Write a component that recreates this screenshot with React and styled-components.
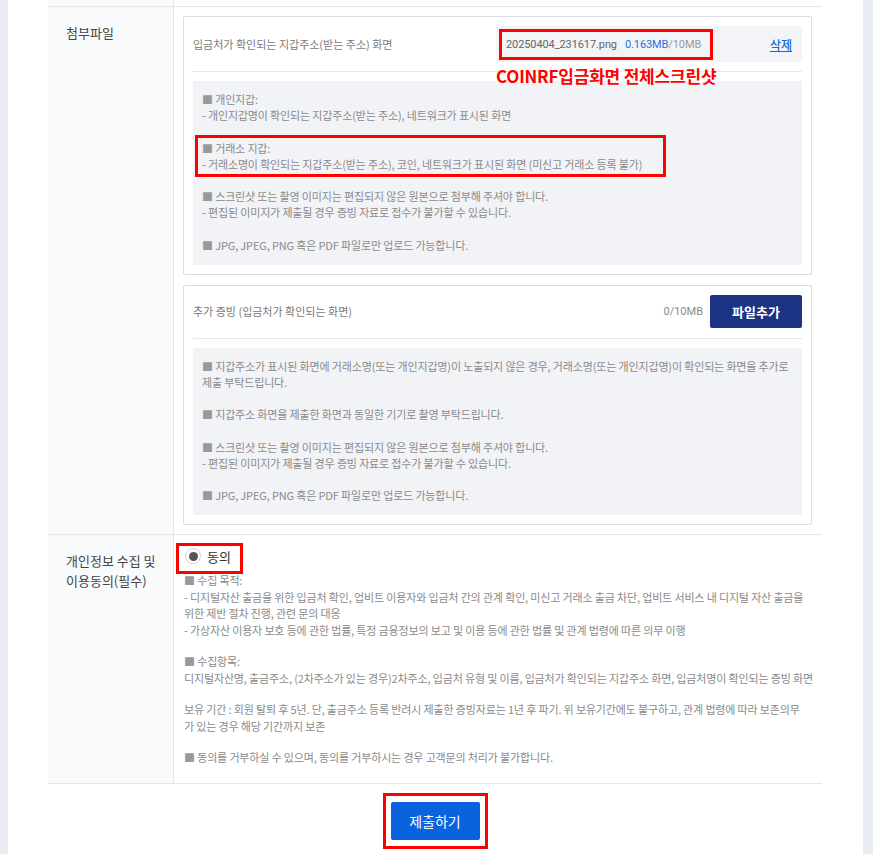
import React from "react";
import styled, { createGlobalStyle } from "styled-components";

const Global = createGlobalStyle`
  html, body { margin: 0; padding: 0; background: #e9ecf1; }
  body { font-family: "Noto Sans CJK KR", "Noto Sans", sans-serif; }
  * { box-sizing: border-box; }
`;

const Panel = styled.div`
  margin-left: 8px;
  width: 855px;
  background: #fff;
  padding: 0 41px 15px 40px;
  min-height: 854px;
`;

const Table = styled.div`
  display: flex;
  flex-direction: column;
`;

const Row = styled.div`
  display: grid;
  grid-template-columns: 126px 1fr;
  border-bottom: 1px solid #e4e6ea;
`;

const Label = styled.div`
  background: #f9fafb;
  border-right: 1px solid #e4e6ea;
  padding: 16px 0 0 18px;
  font-size: 13px;
  line-height: 20px;
  color: #444;
`;

const Cell = styled.div`
  padding: ${(p) => p.$pad || "9px 10px 9px 9px"};
  display: flex;
  flex-direction: column;
  gap: 10px;
  min-width: 0;
`;

const Box = styled.div`
  border: 1px solid #dcdde2;
  border-radius: 2px;
  padding: 9px;
  position: relative;
`;

const BoxHead = styled.div`
  display: flex;
  align-items: center;
  justify-content: space-between;
  padding-bottom: ${(p) => p.$pb || 9}px;
  border-bottom: 1px solid #e6e7eb;
  margin-bottom: 9px;
`;

const BoxTitle = styled.span`
  font-size: 11px;
  color: #7a7a7a;
`;

const FileChip = styled.div`
  width: 306px;
  height: 36px;
  background: #f2f4f8;
  display: flex;
  align-items: center;
  justify-content: space-between;
  padding: 0 10px 0 6px;
  font-size: 11px;
`;

const FileName = styled.span`
  outline: 3px solid #f00;
  padding: 6px 9px 6px 4px;
  color: #666;
  font-family: "Roboto", "Noto Sans CJK KR", sans-serif;
  font-size: 11px;
  letter-spacing: -0.1px;
  white-space: nowrap;
`;

const Size = styled.span`
  color: ${(p) => (p.$blue ? "#1f73e3" : "#9a9a9a")};
  margin-left: ${(p) => (p.$blue ? 8 : 0)}px;
`;

const DeleteLink = styled.a`
  color: #1766d6;
  text-decoration: underline;
  font-size: 12px;
  font-weight: 500;
  cursor: pointer;
`;

const Annotation = styled.span`
  position: absolute;
  left: 312px;
  top: 48px;
  color: #f00;
  font-weight: 700;
  font-size: 17px;
  line-height: 22px;
  letter-spacing: -0.2px;
  font-family: "Noto Sans CJK KR", sans-serif;
  white-space: nowrap;
`;

const HeadRight = styled.div`
  display: flex;
  align-items: center;
  gap: 7px;
`;

const Quota = styled.span`
  font-size: 11px;
  color: #8a8a8a;
  font-family: "Roboto", sans-serif;
`;

const AddButton = styled.button`
  width: 92px;
  height: 33px;
  border: none;
  border-radius: 2px;
  background: #1b3383;
  color: #fff;
  font-family: "Noto Sans CJK KR", sans-serif;
  font-weight: 700;
  font-size: 13px;
`;

const Notes = styled.div`
  background: #f2f3f7;
  padding: 10px 9px 12px 9px;
  display: flex;
  flex-direction: column;
  gap: 16.5px;
`;

const Para = styled.p`
  margin: 0;
  font-size: 11px;
  line-height: 16px;
  letter-spacing: -0.15px;
  color: #8a8a8a;
  position: relative;
  ${(p) =>
    p.$marked &&
    `
    &::after {
      content: "";
      position: absolute;
      left: -7px;
      top: -5px;
      width: 465px;
      bottom: -5px;
      border: 3px solid #f00;
      pointer-events: none;
    }
  `}
`;

const Square = styled.span`
  color: #999;
`;

const RadioRow = styled.label`
  display: inline-flex;
  align-items: center;
  gap: 6px;
  align-self: flex-start;
  position: relative;
  margin: 4px 0 0 1px;
  font-size: 13px;
  color: #333;
  height: 16px;
  &::after {
    content: "";
    position: absolute;
    left: -9px;
    right: -12px;
    top: -5px;
    bottom: -10px;
    border: 3px solid #f00;
  }
`;

const RadioDot = styled.span`
  width: 16px;
  height: 16px;
  border-radius: 50%;
  border: 1px solid #d4d4d4;
  background: #fff;
  display: inline-flex;
  align-items: center;
  justify-content: center;
  &::before {
    content: "";
    width: 9px;
    height: 9px;
    border-radius: 50%;
    background: #555;
  }
`;

const Consent = styled.div`
  display: flex;
  flex-direction: column;
  gap: 15px;
  margin-top: -2px;
`;

const ConsentPara = styled.p`
  margin: 0;
  font-size: 11px;
  line-height: 16.5px;
  letter-spacing: -0.15px;
  color: #8a8a8a;
`;

const Footer = styled.div`
  display: flex;
  justify-content: center;
  padding-top: 9px;
`;

const SubmitFrame = styled.div`
  border: 3px solid #f00;
  padding: 6px 5px;
`;

const SubmitButton = styled.button`
  display: block;
  width: 89px;
  height: 38px;
  border: none;
  border-radius: 2px;
  background: #0a62de;
  color: #fff;
  font-family: "Noto Sans CJK KR", sans-serif;
  font-size: 14px;
`;

const TopStub = styled.div`
  display: grid;
  grid-template-columns: 126px 1fr;
  height: 7px;
  border-bottom: 1px solid #e4e6ea;
`;

const StubLabel = styled.div`
  background: #f9fafb;
  border-right: 1px solid #e4e6ea;
`;

const Sq = () => <Square>■</Square>;

export default function App() {
  return (
    <>
      <Global />
      <Panel>
        <Table>
          <TopStub>
            <StubLabel />
            <div />
          </TopStub>
          <Row>
            <Label>첨부파일</Label>
            <Cell>
              <Box>
                <BoxHead>
                  <BoxTitle>입금처가 확인되는 지갑주소(받는 주소) 화면</BoxTitle>
                  <FileChip>
                    <FileName>
                      20250404_231617.png
                      <Size $blue>0.163MB</Size>
                      <Size>/10MB</Size>
                    </FileName>
                    <DeleteLink>삭제</DeleteLink>
                  </FileChip>
                </BoxHead>
                <Annotation>COINRF입금화면 전체스크린샷</Annotation>
                <Notes>
                  <Para>
                    <Sq /> 개인지갑:
                    <br />- 개인지갑명이 확인되는 지갑주소(받는 주소), 네트워크가 표시된 화면
                  </Para>
                  <Para $marked>
                    <Sq /> 거래소 지갑:
                    <br />- 거래소명이 확인되는 지갑주소(받는 주소), 코인, 네트워크가 표시된 화면 (미신고 거래소 등록 불가)
                  </Para>
                  <Para>
                    <Sq /> 스크린샷 또는 촬영 이미지는 편집되지 않은 원본으로 첨부해 주셔야 합니다.
                    <br />- 편집된 이미지가 제출될 경우 증빙 자료로 접수가 불가할 수 있습니다.
                  </Para>
                  <Para>
                    <Sq /> JPG, JPEG, PNG 혹은 PDF 파일로만 업로드 가능합니다.
                  </Para>
                </Notes>
              </Box>
              <Box>
                <BoxHead $pb={10}>
                  <BoxTitle>추가 증빙 (입금처가 확인되는 화면)</BoxTitle>
                  <HeadRight>
                    <Quota>0/10MB</Quota>
                    <AddButton>파일추가</AddButton>
                  </HeadRight>
                </BoxHead>
                <Notes>
                  <Para>
                    <Sq /> 지갑주소가 표시된 화면에 거래소명(또는 개인지갑명)이 노출되지 않은 경우, 거래소명(또는 개인지갑명)이 확인되는 화면을 추가로 제출 부탁드립니다.
                  </Para>
                  <Para>
                    <Sq /> 지갑주소 화면을 제출한 화면과 동일한 기기로 촬영 부탁드립니다.
                  </Para>
                  <Para>
                    <Sq /> 스크린샷 또는 촬영 이미지는 편집되지 않은 원본으로 첨부해 주셔야 합니다.
                    <br />- 편집된 이미지가 제출될 경우 증빙 자료로 접수가 불가할 수 있습니다.
                  </Para>
                  <Para>
                    <Sq /> JPG, JPEG, PNG 혹은 PDF 파일로만 업로드 가능합니다.
                  </Para>
                </Notes>
              </Box>
            </Cell>
          </Row>
          <Row>
            <Label>
              개인정보 수집 및
              <br />
              이용동의(필수)
            </Label>
            <Cell $pad="9px 8px 17px 10px">
              <RadioRow>
                <RadioDot />
                동의
              </RadioRow>
              <Consent>
                <ConsentPara>
                  <Sq /> 수집 목적:
                  <br />- 디지털자산 출금을 위한 입금처 확인, 업비트 이용자와 입금처 간의 관계 확인, 미신고 거래소 출금 차단, 업비트 서비스 내 디지털 자산 출금을 위한 제반 절차 진행, 관련 문의 대응
                  <br />- 가상자산 이용자 보호 등에 관한 법률, 특정 금융정보의 보고 및 이용 등에 관한 법률 및 관계 법령에 따른 의무 이행
                </ConsentPara>
                <ConsentPara>
                  <Sq /> 수집항목:
                  <br />
                  디지털자산명, 출금주소, (2차주소가 있는 경우)2차주소, 입금처 유형 및 이름, 입금처가 확인되는 지갑주소 화면, 입금처명이 확인되는 증빙 화면
                </ConsentPara>
                <ConsentPara>
                  보유 기간 : 회원 탈퇴 후 5년. 단, 출금주소 등록 반려시 제출한 증빙자료는 1년 후 파기. 위 보유기간에도 불구하고, 관계 법령에 따라 보존의무
                  <br />가 있는 경우 해당 기간까지 보존
                </ConsentPara>
                <ConsentPara>
                  <Sq /> 동의를 거부하실 수 있으며, 동의를 거부하시는 경우 고객문의 처리가 불가합니다.
                </ConsentPara>
              </Consent>
            </Cell>
          </Row>
        </Table>
        <Footer>
          <SubmitFrame>
            <SubmitButton>제출하기</SubmitButton>
          </SubmitFrame>
        </Footer>
      </Panel>
    </>
  );
}
